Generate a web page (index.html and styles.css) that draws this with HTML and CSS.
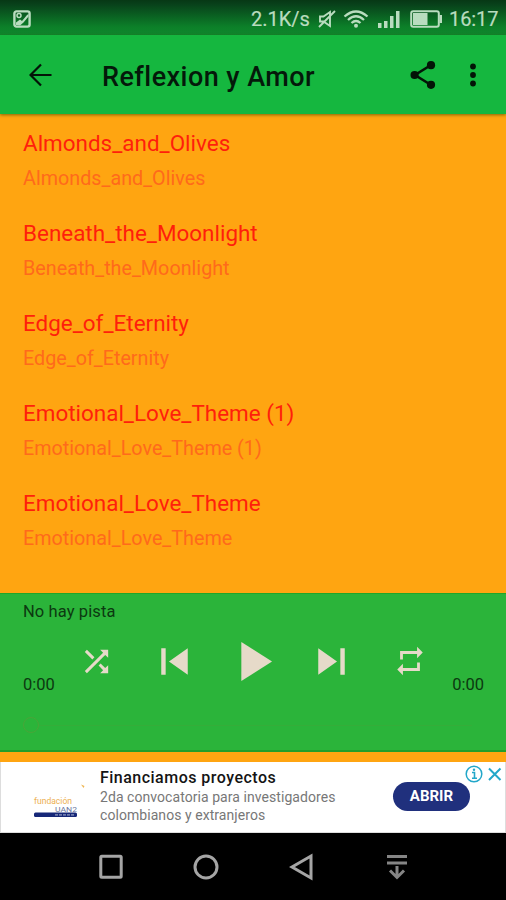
FILE: index.html
```html
<!DOCTYPE html>
<html lang="es">
<head>
<meta charset="utf-8">
<title>Reflexion y Amor</title>
<link rel="stylesheet" href="styles.css">
</head>
<body>
<div class="statusbar">
  <svg class="shot" width="18" height="18" viewBox="0 0 18 18"><rect x="1.400" y="1.400" width="15.200" height="15.200" rx="2" fill="none" stroke="currentColor" stroke-width="2.400"/><path d="M3 15V12.500L7 9.500l2 1.500 5-6 1.500-1v2.500l-5 6-3.500 3z" fill="currentColor"/><circle cx="6" cy="5.600" r="2" fill="none" stroke="currentColor" stroke-width="1.500"/></svg>
  <span class="speed">2.1K/s</span>
  <svg class="mute" width="18" height="18" viewBox="0 0 18 18" fill="none" stroke="currentColor" stroke-width="1.900"><path d="M2 6.500H5.500L12 2V16L5.500 11.500H2zM1 17L17 1"/></svg>
  <svg class="wifi" width="26" height="18" viewBox="0 0 26 18" fill="none" stroke="currentColor" stroke-width="2.300"><path d="M1.500 6.500Q13-3.500 24.500 6.500M5 10Q13 2.600 21 10M8.500 13Q13 9 17.500 13"/><circle cx="13" cy="15.700" r="2" fill="currentColor" stroke="none"/></svg>
  <svg class="signal" width="22" height="18" viewBox="0 0 22 18" fill="currentColor"><path d="M0 13h3.500v5H0zM6 11h3.500v7H6zM12 6h3.500v12H12zM18 1h3.500v17H18z"/></svg>
  <svg class="battery" width="33" height="18" viewBox="0 0 33 18"><rect x="1.200" y="1.200" width="27.600" height="15.600" rx="2" fill="none" stroke="currentColor" stroke-width="2"/><path d="M3 3h14.500v12H3zM29.500 5h2.500v8H29.500z" fill="currentColor"/></svg>
  <span class="clock">16:17</span>
</div>
<header class="appbar">
  <svg class="back" width="24" height="24" viewBox="0 0 24 24" fill="none" stroke="currentColor" stroke-width="2.200"><path d="M22.500 12H2M12 1.500L1.500 12l10.500 10.500"/></svg>
  <h1>Reflexion y Amor</h1>
  <svg class="share" width="26" height="30" viewBox="0 0 26 30"><path d="M21 5L5 15l16 10" fill="none" stroke="currentColor" stroke-width="2.600"/><circle cx="21" cy="5.200" r="4.100"/><circle cx="4.600" cy="15" r="4.100"/><circle cx="21" cy="24.800" r="4.100"/></svg>
  <svg class="more" width="6" height="24" viewBox="0 0 6 24"><circle cx="3" cy="3.500" r="2.900"/><circle cx="3" cy="12" r="2.900"/><circle cx="3" cy="20.500" r="2.900"/></svg>
</header>
<main class="tracks">
  <div class="track"><div class="name">Almonds_and_Olives</div><div class="sub">Almonds_and_Olives</div></div>
  <div class="track"><div class="name">Beneath_the_Moonlight</div><div class="sub">Beneath_the_Moonlight</div></div>
  <div class="track"><div class="name">Edge_of_Eternity</div><div class="sub">Edge_of_Eternity</div></div>
  <div class="track"><div class="name">Emotional_Love_Theme (1)</div><div class="sub">Emotional_Love_Theme (1)</div></div>
  <div class="track"><div class="name">Emotional_Love_Theme</div><div class="sub">Emotional_Love_Theme</div></div>
</main>
<section class="player">
  <div class="now">No hay pista</div>
  <div class="controls">
    <svg width="35" height="35" viewBox="0 0 24 24"><path d="M10.590 9.170L5.410 4 4 5.410l5.170 5.170 1.420-1.410zM14.500 4l2.040 2.040L4 18.590 5.410 20 17.960 7.460 20 9.500V4h-5.500zm.330 9.410l-1.410 1.410 3.130 3.130L14.500 20H20v-5.500l-2.040 2.040-3.130-3.130z"/></svg>
    <svg width="53" height="53" viewBox="0 0 24 24"><path d="M6 6h2v12H6zm3.500 6l8.500 6V6z"/></svg>
    <svg width="67" height="67" viewBox="0 0 24 24"><path d="M8 5v14l11-7z"/></svg>
    <svg width="53" height="53" viewBox="0 0 24 24"><path d="M6 18l8.500-6L6 6v12zM16 6v12h2V6h-2z"/></svg>
    <svg width="34" height="34" viewBox="0 0 24 24"><path d="M7 7h10v3l4-4-4-4v3H5v6h2V7zm10 10H7v-3l-4 4 4 4v-3h12v-6h-2v4z"/></svg>
  </div>
  <div class="times"><span>0:00</span><span>0:00</span></div>
  <div class="seek"><div class="thumb"></div><div class="rail"></div></div>
</section>
<aside class="ad">
  <svg class="logo" width="54" height="40" viewBox="0 0 54 40"><path d="M48 1.500l3.500 1.500-1 2z" fill="#efb652"/><text class="logo-a" x="1" y="21" textLength="38" lengthAdjust="spacingAndGlyphs">fundación</text><text class="logo-b" x="22" y="28.500" textLength="22" lengthAdjust="spacingAndGlyphs">UAN2</text><rect x="1" y="29.500" width="43" height="4.500" rx="1.500" fill="#172878"/><path d="M22 31.800h19" stroke="#6f7bad" stroke-width="1.800" stroke-dasharray="3 1"/></svg>
  <div class="copy"><div class="headline">Financiamos proyectos</div><div class="desc">2da convocatoria para investigadores<br>colombianos y extranjeros</div></div>
  <div class="open">ABRIR</div>
  <svg class="choices" width="40" height="18" viewBox="0 0 40 18" fill="none" stroke="#22a7c9"><circle cx="9" cy="9" r="7.800" stroke-width="1.500"/><path d="M7 7.500h2.500V13M7 13.200h5" stroke-width="1.600"/><circle cx="9" cy="4.700" r="1.200" fill="#22a7c9" stroke="none"/><path d="M24 3.500l11.500 11.500M35.500 3.500L24 15" stroke-width="2"/></svg>
</aside>
<nav class="navbar">
  <svg width="26" height="28" viewBox="0 0 26 28"><rect x="2.800" y="3.300" width="20.400" height="21" rx="1"/></svg>
  <svg width="26" height="28" viewBox="0 0 26 28"><circle cx="13" cy="14" r="11"/></svg>
  <svg width="26" height="28" viewBox="0 0 26 28"><path d="M22 3v22L3 14z"/></svg>
  <svg class="dim" width="26" height="28" viewBox="0 0 26 28"><path d="M3 3.500h20M3 10h20M13 13v11M6 17.500l7 7 7-7"/></svg>
</nav>
</body>
</html>
```

FILE: styles.css
```css
* { box-sizing: border-box; }
body { margin: 0; width: 506px; height: 900px; overflow: hidden; background: #ffa511; font-family: Roboto, "Liberation Sans", sans-serif; }
svg { display: block; flex: none; }

.statusbar { height: 35px; display: flex; align-items: center; padding: 2px 8px 0 13px; color: #b9dcbf; background: linear-gradient(#073815 0, #08401a 4px, #0c8029 27px, #10872d 35px); white-space: nowrap; }
.speed { margin-left: auto; font-size: 20px; width: 59px; -webkit-text-stroke: .2px; }
.mute { margin-left: 8px; }
.wifi { margin-left: 7px; }
.signal { margin-left: 9px; }
.battery { margin-left: 10px; }
.clock { margin-left: 6px; width: 49px; font-size: 20px; letter-spacing: -.1px; -webkit-text-stroke: .2px; }

.appbar { position: relative; z-index: 1; height: 79px; display: flex; align-items: center; padding: 0 30px 0 28px; background: #15b73f; color: #04190a; box-shadow: 0 1px 3px rgba(60, 70, 0, .65); }
.back { color: #031407; margin-left: 1px; }
.appbar h1 { margin: 4px auto 0 49px; font-size: 27px; line-height: 32px; font-weight: 500; letter-spacing: .45px; white-space: nowrap; }
.share { margin-right: 34px; color: #031407; }
.share, .more { fill: #031407; }

.tracks { height: 479px; padding: 12px 23px 0; overflow: hidden; }
.track { height: 90px; padding-top: 3px; white-space: nowrap; }
.name { font-size: 22.450px; line-height: 28px; color: #ff1f0b; }
.sub { margin-top: 9px; font-size: 19.750px; line-height: 26px; color: #ff6a1b; }

.player { height: 159px; padding-top: 7px; background: #2bb43a; border-top: 1px solid #20a52a; border-bottom: 2px solid #219e2b; color: #0c3910; }
.now { height: 22px; padding-left: 23px; font-size: 16.500px; line-height: 22px; letter-spacing: .1px; }
.controls { height: 52px; margin-top: 12px; padding: 0 57px; display: grid; grid-template-columns: repeat(5, 1fr); grid-template-rows: 52px; place-items: center; fill: #e6dac9; }
.times { height: 20px; margin-top: -12px; padding: 0 22px 0 23px; display: flex; justify-content: space-between; font-size: 16.500px; line-height: 20px; }
.seek { margin-top: 22px; padding: 0 34px 0 23px; display: flex; align-items: center; }
.thumb { width: 16px; height: 16px; border: 1.500px solid #48a638; border-radius: 50%; }
.rail { flex: 1; height: 1px; background: #35ad39; }

.ad { position: relative; height: 71px; margin-top: 10px; padding: 7px 35px 0 32px; display: flex; background: #fff; border: solid #ddd; border-width: 0 1px 1px; }
.logo { margin-top: 14px; }
.logo-a { font-size: 8.500px; fill: #edb052; }
.logo-b { font-size: 7px; fill: #6b779e; }
.copy { margin-left: 13px; white-space: nowrap; }
.headline { font-size: 16px; line-height: 18px; font-weight: 500; letter-spacing: .48px; color: #141414; }
.desc { margin-top: 1px; font-size: 14px; line-height: 18px; letter-spacing: .06px; color: #777; }
.open { width: 77px; height: 29px; margin: 13px 0 0 auto; border-radius: 15px; background: #20307d; color: #fff; font-size: 15px; line-height: 29px; font-weight: 700; text-align: center; }
.choices { position: absolute; top: 3px; right: 0; }

.navbar { height: 67px; padding: 0 61px 0 63px; display: grid; grid-template-columns: repeat(4, 1fr); place-items: center; background: #000; fill: none; stroke: #a5a5a5; stroke-width: 3; }
.dim { stroke: #858585; }
```
